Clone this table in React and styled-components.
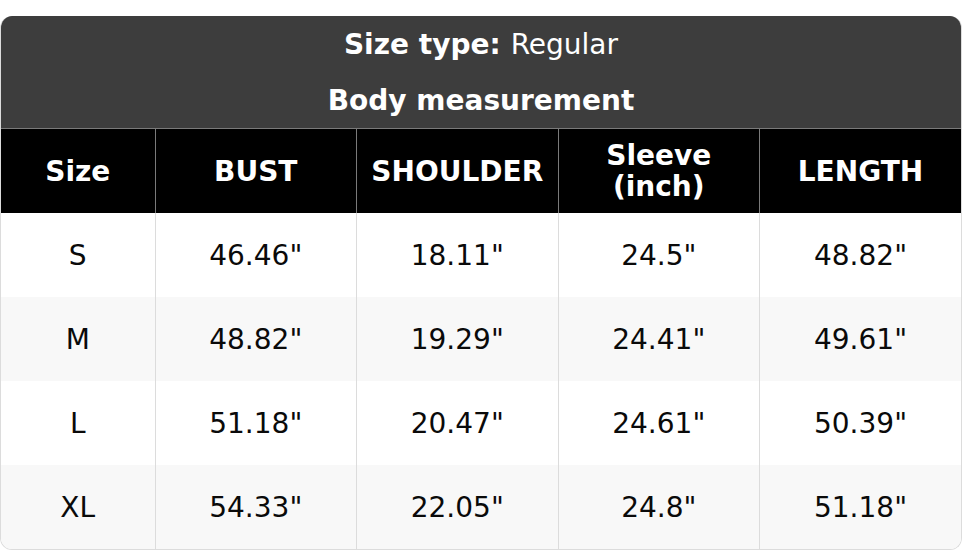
import React from "react";
import styled, { createGlobalStyle } from "styled-components";

const GlobalStyle = createGlobalStyle`
  body {
    margin: 0;
    background: #fff;
    font-family: "DejaVu Sans", Verdana, sans-serif;
  }
`;

const columns = ["Size", "BUST", "SHOULDER", "Sleeve (inch)", "LENGTH"];

const rows = [
  ["S", '46.46"', '18.11"', '24.5"', '48.82"'],
  ["M", '48.82"', '19.29"', '24.41"', '49.61"'],
  ["L", '51.18"', '20.47"', '24.61"', '50.39"'],
  ["XL", '54.33"', '22.05"', '24.8"', '51.18"'],
];

const App = () => {
  return (
    <Page>
      <GlobalStyle />
      <Chart>
        <Caption>
          <CaptionLine>
            <b>Size type:</b> Regular
          </CaptionLine>
          <CaptionLine>
            <b>Body measurement</b>
          </CaptionLine>
        </Caption>
        <Table>
          <colgroup>
            <col style={{ width: 154 }} />
            <col />
            <col />
            <col />
            <col />
          </colgroup>
          <thead>
            <tr>
              {columns.map((c) => (
                <Th key={c}>
                  {c === "Sleeve (inch)" ? (
                    <>
                      Sleeve
                      <br />
                      (inch)
                    </>
                  ) : (
                    c
                  )}
                </Th>
              ))}
            </tr>
          </thead>
          <tbody>
            {rows.map((r, i) => (
              <Row key={r[0]} $striped={i % 2 === 1}>
                {r.map((v, j) => (
                  <Td key={j}>{v}</Td>
                ))}
              </Row>
            ))}
          </tbody>
        </Table>
      </Chart>
    </Page>
  );
};

export default App;

const Page = styled.div`
  padding-top: 16px;
`;

const Chart = styled.div`
  width: 962px;
  box-sizing: border-box;
  border: 1px solid #dcdcdc;
  border-top: none;
  border-radius: 12px;
  overflow: hidden;
  background: #fff;
`;

const Caption = styled.div`
  background: #3d3d3d;
  color: #fff;
  display: flex;
  flex-direction: column;
  height: 112px;
  font-size: 28px;
`;

const CaptionLine = styled.div`
  height: 56px;
  display: flex;
  align-items: center;
  justify-content: center;
  gap: 10px;
  font-weight: normal;
  b {
    font-weight: bold;
  }
`;

const Table = styled.table`
  width: 100%;
  border-collapse: collapse;
  table-layout: fixed;
  font-size: 28px;
`;

const Th = styled.th`
  background: #000;
  color: #fff;
  font-weight: bold;
  height: 84px;
  padding: 0;
  line-height: 31px;
  border: 1px solid #7a7a7a;
  border-bottom: none;
  &:first-child {
    border-left: none;
  }
  &:last-child {
    border-right: none;
  }
`;

const Row = styled.tr`
  background: ${(p) => (p.$striped ? "#f8f8f8" : "#fff")};
`;

const Td = styled.td`
  height: 84px;
  padding: 0;
  text-align: center;
  color: #0a0a0a;
  border-left: 1px solid #dcdcdc;
  &:first-child {
    border-left: none;
  }
`;
